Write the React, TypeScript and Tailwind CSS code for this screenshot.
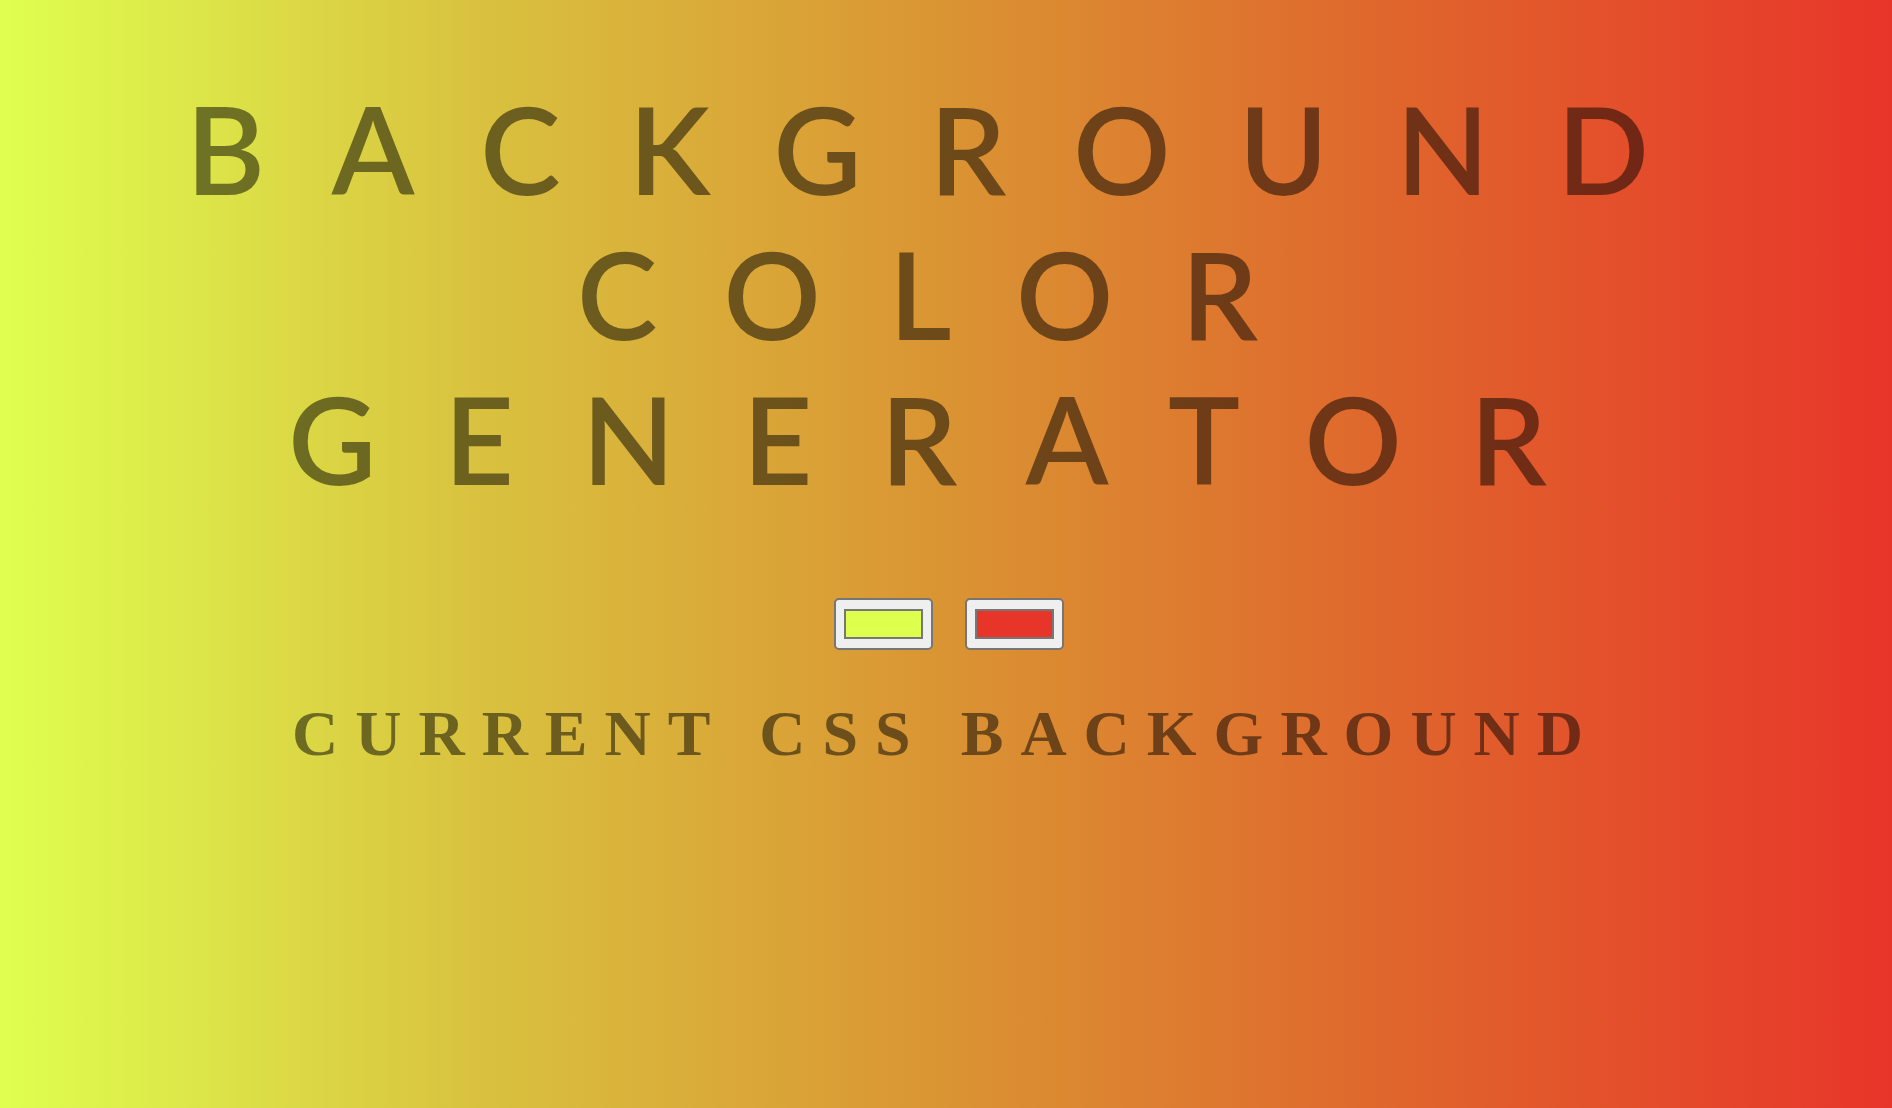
import { useState } from "react";

const TITLE_LINES = ["BACKGROUND", "COLOR", "GENERATOR"];

function ColorPicker({ value, onChange }: { value: string; onChange: (v: string) => void }) {
  return (
    <label className="block w-[99px] h-[52px] rounded-[5px] border-2 border-[#767676] bg-[#efefef] px-[8px] py-[9px] cursor-pointer">
      <span className="block w-full h-full border-2 border-[#777777]" style={{ backgroundColor: value }} />
      <input
        type="color"
        value={value}
        onChange={(e) => onChange(e.target.value)}
        className="sr-only"
      />
    </label>
  );
}

export default function App() {
  const [left, setLeft] = useState("#dfff4f");
  const [right, setRight] = useState("#e8352a");

  // the screenshot's gradient sags darker through the middle, so pin a few stops
  const background = `linear-gradient(to right, ${left} 0%, #d9c23f 25%, #da9433 50%, #e0632c 75%, ${right} 100%)`;

  return (
    <div
      className="min-h-screen w-full pt-[76px] text-center text-black/50"
      style={{ backgroundImage: background }}
    >
      <h1 className="pl-[11px] font-['Lato','Open_Sans',sans-serif] font-semibold text-[121px] leading-[145px] tracking-[68px]">
        {TITLE_LINES.map((line) => (
          <div key={line}>{line}</div>
        ))}
      </h1>

      <div className="mt-[87px] pl-[5px] flex justify-center gap-[32px]">
        <ColorPicker value={left} onChange={setLeft} />
        <ColorPicker value={right} onChange={setRight} />
      </div>

      <h3 className="mt-[47px] font-['Liberation_Serif','Times_New_Roman',serif] font-bold text-[64px] leading-[74px] tracking-[17px]">
        CURRENT CSS BACKGROUND
      </h3>
    </div>
  );
}
